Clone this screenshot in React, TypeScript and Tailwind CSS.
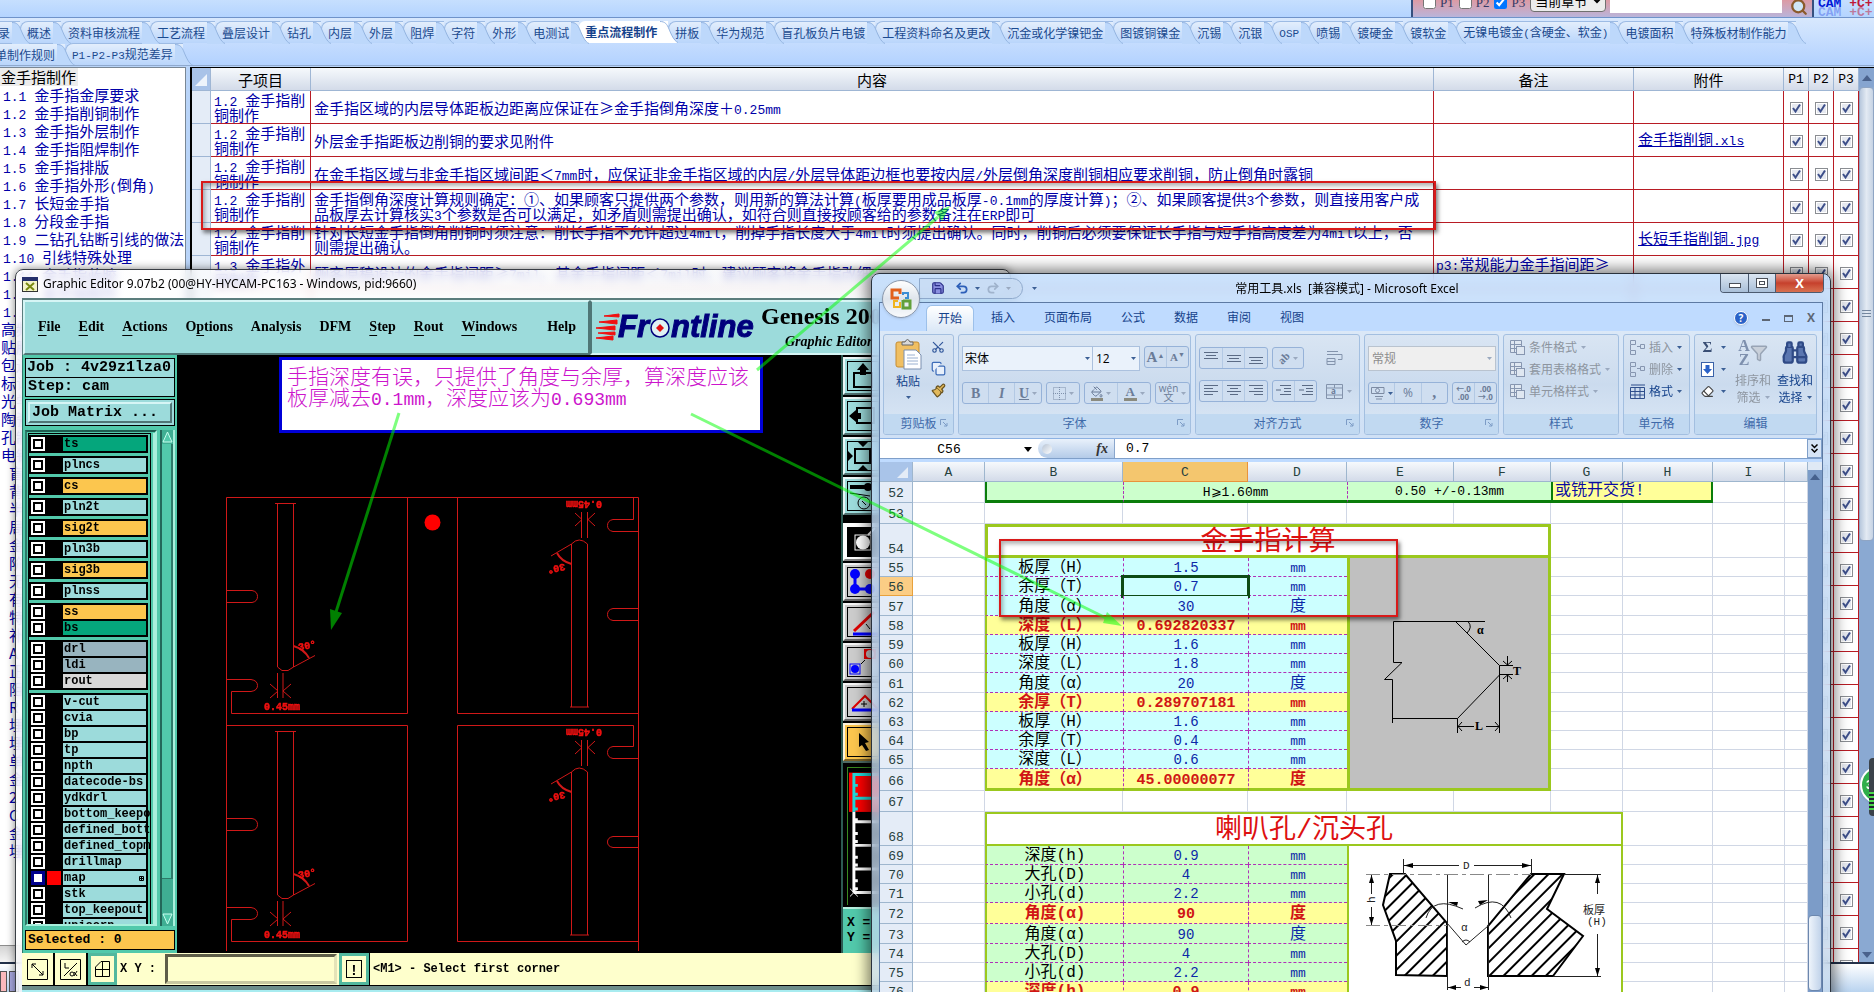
import React from "react";
import { Scissors, Copy, Paintbrush, Save, Undo2, Redo2, Binoculars, Filter, Eraser, PaintBucket, Search } from "lucide-react";

/* ---------- shared text helpers ---------- */

function Mixed({ text, latin }: { text: string; latin: string }) {
  const parts = text.split(/([\x20-\x7e]+)/).filter(Boolean);
  return (
    <>
      {parts.map((p, i) =>
        /^[\x20-\x7e]/.test(p) ? (
          <span key={i} className={latin}>{p}</span>
        ) : (
          <React.Fragment key={i}>{p}</React.Fragment>
        )
      )}
    </>
  );
}

const MONO13 = "whitespace-pre font-['Liberation_Mono',monospace] text-[13px]";
const MONO18 = "whitespace-pre font-['Liberation_Mono',monospace] text-[18px]";

function Tick({ label }: { label: string }) {
  return (
    <span className="relative inline-block size-[13px] align-middle">
      <input type="checkbox" defaultChecked aria-label={label} className="block size-[13px] appearance-none border border-[#8a8d92] bg-[#e6e9f0] shadow-[inset_0_0_0_1px_#fff]" />
      <svg className="pointer-events-none absolute inset-0" width="13" height="13" viewBox="0 0 13 13">
        <path d="M3 6 L5.5 9.5 L10 2.5" fill="none" stroke="#3d4f8a" strokeWidth="2" />
      </svg>
    </span>
  );
}

/* ---------- rule browser behind the windows ---------- */

const tabs = ["录", "概述", "资料审核流程", "工艺流程", "叠层设计", "钻孔", "内层", "外层", "阻焊", "字符", "外形", "电测试", "重点流程制作", "拼板", "华为规范", "盲孔板负片电镀", "工程资料命名及更改", "沉金或化学镍钯金", "图镀铜镍金", "沉锡", "沉银", "OSP", "喷锡", "镀硬金", "镀软金", "无镍电镀金(含硬金、软金)", "电镀面积", "特殊板材制作能力"];

function Tab({ text, active }: { text: string; active?: boolean }) {
  return (
    <button
      className={
        active
          ? "relative h-[22px] shrink-0 rounded-tl-md bg-white pr-[11px] pl-[6px] text-[12px] leading-[16px] font-bold whitespace-nowrap text-[#15428b]"
          : "relative h-[22px] shrink-0 rounded-tl-lg border-t border-l border-[#9dbbe4] bg-gradient-to-b from-[#e3eefc] to-[#b9d5fb] pr-[10px] pl-[6px] text-[12px] leading-[15px] whitespace-nowrap text-[#1b4a8f]"
      }
    >
      <Mixed text={text} latin="font-['Liberation_Mono',monospace] text-[11px]" />
      <svg className="absolute top-0 left-[calc(100%-8px)] z-10" width="18" height="22" viewBox="0 0 18 22">
        <path d="M0 0 C5 0 7 3 9 8 S14 20 18 22 L0 22 Z" fill={active ? "#ffffff" : "#bdd8fb"} />
        <path d="M0 0.5 C5 0.5 7 3 9 8 S14 20 18 21.5" fill="none" stroke="#94b4e0" />
      </svg>
    </button>
  );
}

const tree = ["金手指制作", "1.1 金手指金厚要求", "1.2 金手指削铜制作", "1.3 金手指外层制作", "1.4 金手指阻焊制作", "1.5 金手指排版", "1.6 金手指外形(倒角)", "1.7 长短金手指", "1.8 分段金手指", "1.9 二钻孔钻断引线的做法", "1.10 引线特殊处理", "1.11 金手指蓝胶", "1.12 金手指制作", "1.13 其它"];
const treeRoots = ["高频板制作", "贴膜制作", "包边制作", "标识制作", "光学点", "陶瓷板", "孔制作", "电镀制作"];
const treeLeaves = ["盲孔", "背钻", "半孔", "局部", "金属", "阶梯", "无卤", "有铅", "特殊", "补偿", "A", "正片", "阻焊", "R", "埋孔", "埋阻", "单面", "金", "2", "C", "金", "埋铜"];

const rules: { sub: string[]; body: string[]; note?: string; file?: string }[] = [
  { sub: ["1.2 金手指削", "铜制作"], body: ["金手指区域的内层导体距板边距离应保证在≥金手指倒角深度＋0.25mm"] },
  { sub: ["1.2 金手指削", "铜制作"], body: ["外层金手指距板边削铜的要求见附件"], file: "金手指削铜.xls" },
  { sub: ["1.2 金手指削", "铜制作"], body: ["在金手指区域与非金手指区域间距＜7mm时，应保证非金手指区域的内层/外层导体距边框也要按内层/外层倒角深度削铜相应要求削铜，防止倒角时露铜"] },
  { sub: ["1.2 金手指削", "铜制作"], body: ["金手指倒角深度计算规则确定：①、如果顾客只提供两个参数，则用新的算法计算(板厚要用成品板厚-0.1mm的厚度计算)；②、如果顾客提供3个参数，则直接用客户成", "品板厚去计算核实3个参数是否可以满足，如矛盾则需提出确认，如符合则直接按顾客给的参数备注在ERP即可"] },
  { sub: ["1.2 金手指削", "铜制作"], body: ["针对长短金手指倒角削铜时须注意：削长手指不允许超过4mil，削掉手指长度大于4mil时须提出确认。同时，削铜后必须要保证长手指与短手指高度差为4mil以上，否", "则需提出确认。"], file: "长短手指削铜.jpg" },
  { sub: ["1.3 金手指外", "层制作"], body: ["顾客原稿设计的金手指间距≥7mil，其金手指间距＜7mil时，建议顾客将金手指改细"], note: "p3:常规能力金手指间距≥" },
];
for (let i = 0; i < 21; i++) rules.push({ sub: [""], body: [""] });

function SearchPanel() {
  return (
    <div className="flex h-[17px] items-end overflow-hidden">
      <div className="flex h-[17px] w-[403px] items-end gap-1 overflow-hidden border-x-2 border-[#35507f] bg-gradient-to-b from-[#dc9aa4] to-[#b9b4da] pl-[10px]">
        {["P1", "P2", "P3"].map((p, i) => (
          <label key={p} className="mb-[8px] flex items-center gap-1 pr-px font-['Liberation_Serif',serif] text-[13px] leading-[12px] text-[#333a66]">
            <input type="checkbox" defaultChecked={i === 2} className="size-[13px]" />
            {p}
          </label>
        ))}
        <select aria-label="范围" className="mb-[5px] h-[24px] w-[76px] shrink-0 rounded-sm border border-[#707070] bg-[#ececec] text-[13px] text-black">
          <option>当前章节</option>
        </select>
        <input aria-label="搜索" className="mb-[4px] h-[22px] min-w-0 flex-1 bg-white" />
        <button aria-label="搜索" className="mb-[1px] px-1">
          <Search className="size-[18px] fill-[#cfe6f7] text-[#8b5a2b]" strokeWidth={3} />
        </button>
      </div>
      <div className="w-[60px] overflow-hidden pl-1 font-['Liberation_Mono',monospace] text-[13px] leading-[9px] font-bold whitespace-nowrap text-[#0018d8]">
        CAM <span className="text-[#c01838]">+C+</span>
        <div className="text-[#0018d8]/30">CAM <span className="text-[#c01838]/50">+C+</span></div>
      </div>
    </div>
  );
}

function RuleBrowser() {
  const th = "border-r border-b border-[#9fb6d4] bg-gradient-to-b from-[#f6f9fc] to-[#d3dbe9] p-0 text-center font-normal";
  const td = "border-r border-b border-[#b81c24] p-0";
  return (
    <div className="flex h-full w-full flex-col bg-[#b9d4f8] font-['Noto_Sans_CJK_SC',sans-serif]">
      <div className="flex h-[18px] shrink-0 justify-end border-b border-[#6f93ca] bg-gradient-to-b from-[#c6dffe] to-[#b4d4ff]">
        <SearchPanel />
      </div>
      <div className="h-[48px] shrink-0 overflow-hidden border-b border-[#8fa9ce] bg-gradient-to-b from-[#d8e8fd] to-[#b3d2ff] pt-[3px]">
        <div className="-ml-[9px] flex">
          {tabs.map((t) => (
            <Tab key={t} text={t} active={t === "重点流程制作"} />
          ))}
        </div>
        <div className="-ml-[12px] flex">
          <Tab text="单制作规则" />
          <Tab text="P1-P2-P3规范差异" />
        </div>
      </div>
      <div className="flex min-h-0 flex-1 pt-px">
        <div className="flex w-[186px] shrink-0 flex-col">
          <div className="min-h-0 flex-1 overflow-hidden border-t border-r border-[#7a8794] bg-white text-[15px] leading-[18px] whitespace-nowrap text-[#0000a8]">
            <div className="h-[18px] w-[78px] bg-[#ececec] pl-px text-black">{tree[0]}</div>
            {tree.slice(1).map((t) => (
              <div key={t} className="h-[18px] pl-[3px]"><Mixed text={t} latin={MONO13} /></div>
            ))}
            {treeRoots.map((t) => <div key={t} className="h-[18px] pl-px">{t}</div>)}
            {treeLeaves.map((t, i) => <div key={i} className="h-[18px] pl-[9px]">{t}</div>)}
          </div>
          <div className="h-[17px] border-t border-[#8d8d8d] bg-gradient-to-b from-[#d4d4d4] to-[#f4f4f4]" />
        </div>
        <div className="ml-1 flex min-w-0 flex-1 overflow-hidden border-t border-l-2 border-black bg-white">
          <table className="w-full table-fixed border-separate border-spacing-0 self-start text-[15px] leading-[15px] text-[#0000a8]">
            <colgroup>
              <col className="w-[19px]" /><col className="w-[100px]" /><col /><col className="w-[200px]" /><col className="w-[150px]" />
              <col className="w-[25px]" /><col className="w-[25px]" /><col className="w-[25px]" />
            </colgroup>
            <thead>
              <tr className="h-[23px] text-black">
                <th className={th}>
                  <svg width="18" height="22" viewBox="0 0 18 22"><rect width="18" height="22" fill="#a9c3e8" /><path d="M15 6V18H3Z" fill="#eef4fb" /></svg>
                </th>
                {["子项目", "内容", "备注", "附件"].map((h) => <th key={h} className={th}>{h}</th>)}
                {["P1", "P2", "P3"].map((h) => <th key={h} className={`${th} font-['Liberation_Mono',monospace] text-[13px]`}>{h}</th>)}
              </tr>
            </thead>
            <tbody>
              {rules.map((r, i) => (
                <tr key={i} className="h-[33px]">
                  <td className="border-r border-b border-[#9fb6d4] bg-[#e4ecf7] p-0" />
                  <td className={`${td} pl-[3px] whitespace-nowrap`}>{r.sub.map((l, k) => <div key={k} className="h-[15px]"><Mixed text={l} latin={MONO13} /></div>)}</td>
                  <td className={`${td} overflow-hidden pl-[3px] whitespace-nowrap`}>{r.body.map((l, k) => <div key={k} className="h-[15px]"><Mixed text={l} latin={MONO13} /></div>)}</td>
                  <td className={`${td} overflow-hidden pl-[2px] align-top whitespace-nowrap`}>{r.note ? <div className="h-[15px]"><Mixed text={r.note} latin={MONO13} /></div> : null}</td>
                  <td className={`${td} pl-1 whitespace-nowrap`}>{r.file ? <a href="#file" className="underline"><Mixed text={r.file} latin={MONO13} /></a> : null}</td>
                  {["P1", "P2", "P3"].map((p) => <td key={p} className={`${td} text-center leading-none`}><Tick label={p} /></td>)}
                </tr>
              ))}
            </tbody>
          </table>
          <div className="flex w-[15px] shrink-0 flex-col bg-[#8aa9d2]">
            <div className="grid h-[19px] shrink-0 place-items-center bg-[#86a5d0]"><svg width="10" height="6"><path d="M5 0L10 6H0Z" fill="#4a628c" /></svg></div>
            <div className="grid h-[454px] shrink-0 place-items-center rounded-sm border border-[#8fa5c4] bg-gradient-to-r from-[#b8c8dd] via-[#e3eaf3] to-[#c6d3e4]">
              <svg width="9" height="8" stroke="#74879f"><path d="M0 .5H9M0 3.500H9M0 6.500H9" /></svg>
            </div>
            <div className="flex flex-1 items-end justify-center pb-1"><svg width="10" height="6"><path d="M0 0H10L5 6Z" fill="#4a628c" /></svg></div>
          </div>
        </div>
      </div>
      <div className="flex h-[30px] shrink-0 flex-col border-t-2 border-[#23314a] bg-gradient-to-b from-white to-[#b9d3ef]">
        <div className="h-[7px]" />
        <div className="flex flex-1"><div className="w-[7px] border border-[#555] bg-[#fbb9bb]" /><div className="ml-[2px] w-[10px] border border-[#555] bg-[#a9a9e2]" /></div>
      </div>
    </div>
  );
}

/* ---------- Genesis graphic editor ---------- */

const layerGroups: [string, string][][] = [
  [["ts", "g"]], [["plncs", "t"]], [["cs", "o"]], [["pln2t", "t"]], [["sig2t", "o"]], [["pln3b", "t"]], [["sig3b", "o"]], [["plnss", "t"]],
  [["ss", "o"], ["bs", "g"]],
  [["drl", "b"], ["ldi", "b"], ["rout", "w"]],
  [["v-cut", "t"], ["cvia", "t"], ["bp", "t"], ["tp", "t"], ["npth", "t"], ["datecode-bs", "t"], ["ydkdrl", "t"], ["bottom_keepo", "t"], ["defined_bott", "t"], ["defined_topm", "t"], ["drillmap", "t"], ["map", "t"], ["stk", "t"], ["top_keepout", "t"], ["unicorn", "t"]],
];
const layerBg: Record<string, string> = { g: "bg-[#05a67c]", t: "bg-[#9cdbdb]", o: "bg-[#fcc64e]", b: "bg-[#98b4bf]", w: "bg-[#d8d8d8]" };

const menus: [string, number][] = [["File", 0], ["Edit", 0], ["Actions", 0], ["Options", 1], ["Analysis", -1], ["DFM", -1], ["Step", 0], ["Rout", 0], ["Windows", 0]];

function Board({ dy }: { dy: number }) {
  const txt = "fill-[#f01010] stroke-[#f01010] font-['Liberation_Mono',monospace] text-[10px] font-bold";
  return (
    <g transform={`translate(0 ${dy})`}>
      <path d="M277.5 667V503.5H293.5V667M275 503.5H296M277.5 667L282 670.5H288L293.5 667L315 655.5" />
      <path d="M293.5 646Q304 649 309 658" strokeWidth="2" />
      <path d="M277.5 673V698M283 673V698M270 684L278 691L270 698M291 684L283 691L291 698" />
      <g strokeWidth="0.5">
        <text x="264" y="710" className={txt}>0.45mm</text>
        <text x="299" y="650" className={txt} transform="rotate(-12 302 650)">30°</text>
        <text x="564" y="507" className={txt} transform="rotate(180 583 504)">0.45mm</text>
        <text x="551" y="569" className={txt} transform="rotate(168 558 567)">30°</text>
      </g>
      <path d="M571.5 707V544Q579 536 587.5 544V707M570 707H589M571.5 544L551 556" />
      <path d="M557 553Q561 561 571.5 564" strokeWidth="2" />
      <path d="M581.5 512V538M587.5 512V538M575 513L582 519.5L575 526M595 513L588 519.5L595 526" />
    </g>
  );
}

function BoardCanvas() {
  return (
    <svg className="block h-full w-[664px] shrink-0 bg-black" viewBox="177 355 664 598" preserveAspectRatio="xMinYMin slice" fill="none" stroke="#d01818">
      <path d="M226.5 951V497.5H638.5V951" />
      <path d="M407.5 497V713.5H231.5V691.5H251Q257.5 690.5 257.5 685.5T251 679.5H226.5M226.5 590.5H252Q257.5 591.5 257.5 596.5T252 602.5H226.5" />
      <path d="M457.5 497V713.5H638.5M633.5 497V519.5H613Q607.5 520.5 607.5 525.5T613 531.5H638.5M638.5 608.5H613Q607.5 609.5 607.5 614.5T613 620.5H638.5" />
      <path d="M226.5 725.5H407.5V941.5H231.5V919.5H251Q257.5 918.5 257.5 913.5T251 907.5H226.5M226.5 818.5H252Q257.5 819.5 257.5 824.5T252 830.5H226.5" />
      <path d="M638.5 941.5H457.5V725.5H633.5V746.5H613Q607.5 747.5 607.5 752.5T613 758.5H638.5M638.5 836.5H613Q607.5 837.5 607.5 842T613 847.5H638.5" />
      <circle cx="432.5" cy="522.5" r="8" fill="#ff0000" stroke="none" />
      <Board dy={0} />
      <Board dy={228} />
    </svg>
  );
}

const toolArt: { bg: string; art: React.ReactNode }[] = [
  { bg: "bg-[#9cdbdb]", art: <><path d="M6 12H24V26H6Z" fill="none" stroke="#000" strokeWidth="2" /><path d="M15 2L21 9H18V14H12V9H9Z" /></> },
  { bg: "bg-[#9cdbdb]", art: <><path d="M9 7H26V22H9Z" fill="none" stroke="#000" strokeWidth="2" /><path d="M1 15L8 9V12H13V18H8V21Z" /></> },
  { bg: "bg-[#9cdbdb]", art: <><path d="M7 8H22V22H7Z" fill="none" stroke="#000" strokeWidth="2" /><path d="M10 1H20L15 6ZM10 29H20L15 24ZM0 10V20L5 15Z" /></> },
  { bg: "bg-[#9cdbdb]", art: <><path d="M2 4H18V8H2Z" /><circle cx="20" cy="6" r="4" /><path d="M2 12L22 15" stroke="#000" /><circle cx="16" cy="22" r="6" fill="none" stroke="#000" /><path d="M14 20L18 24" stroke="#000" /></> },
  { bg: "bg-white", art: <><rect width="30" height="30" /><rect x="7" y="8" width="16" height="15" fill="none" stroke="#fff" /><circle cx="15" cy="15.500" r="7" fill="#fff" /><path d="M20 8L27 1" stroke="#fff" strokeWidth="2" /></> },
  { bg: "bg-[#cccccc]", art: <><path d="M7 7V22H22" fill="none" stroke="#0000ff" strokeWidth="3" /><circle cx="7" cy="7" r="5" fill="#0000ff" /><circle cx="7" cy="22" r="5" fill="#0000ff" /><circle cx="22" cy="22" r="5" fill="#0000ff" /><circle cx="22" cy="7" r="5" fill="#e00000" /></> },
  { bg: "bg-[#cccccc]", art: <><path d="M6 24L26 5" stroke="#e00000" strokeWidth="3" /><path d="M5 27H30" stroke="#0000ff" strokeWidth="3" /><path d="M18 17L22 22" stroke="#000" /></> },
  { bg: "bg-[#cccccc]", art: <><rect x="2" y="17" width="10" height="10" fill="none" stroke="#0000ff" /><circle cx="7" cy="22" r="4" fill="#0000ff" /><rect x="16" y="2" width="12" height="10" fill="#f00000" /><circle cx="22" cy="7" r="4" fill="#ccc" /><path d="M13 17L17 13" stroke="#000" /></> },
  { bg: "bg-[#cccccc]", art: <><path d="M4 22L17 9L30 22" fill="none" stroke="#e00000" strokeWidth="2" /><path d="M4 23H30" stroke="#0000ff" strokeWidth="3" /><path d="M16 14V20M13 17H19" stroke="#000" /></> },
  { bg: "bg-[#fcc64e]", art: <path d="M11 6L21 15L17 16L21 23L18 24L14 18L11 20Z" /> },
];

function EditorWindow() {
  const foot = "grid w-[33px] shrink-0 place-items-center border-r-2 border-black";
  return (
    <section className="absolute top-[269px] -bottom-2 left-[15px] w-[996px] rounded-t-lg border border-[#3a3f45] bg-gradient-to-r from-white/75 to-[#f4f6f8]/75 px-[6px] font-['Liberation_Mono',monospace] text-black shadow-[0_0_8px_rgba(0,0,0,0.5)] backdrop-blur-[4px]">
      <header className="flex h-[28px] items-center gap-[5px]">
        <svg width="16" height="15" viewBox="0 0 16 15"><rect x="0.500" y="0.500" width="15" height="14" fill="#f4f4c8" stroke="#333" /><rect width="16" height="4" fill="#25306c" /><path d="M4 6L12 13M12 6L4 13" stroke="#7a8a10" strokeWidth="2" /></svg>
        <h1 className="font-['Noto_Sans','Open_Sans',sans-serif] text-[12px]">Graphic Editor 9.07b2 (00@HY-HYCAM-PC163 - Windows, pid:9660)</h1>
      </header>
      <div className="flex h-[57px] border-t-2 border-l border-[#5b7d7d] bg-[#9cdbdb]">
        <nav className="flex w-[567px] shrink-0 items-center gap-[18px] border-2 border-t-[#d6f5f5] border-r-[#4f7676] border-b-[#4f7676] border-l-[#d6f5f5] pb-[3px] pl-[13px] font-['Liberation_Serif',serif] text-[14px] font-bold">
          {menus.map(([m, u]) => (
            <button key={m}>
              {u < 0 ? m : <>{m.slice(0, u)}<span className="underline underline-offset-4">{m[u]}</span>{m.slice(u + 1)}</>}
            </button>
          ))}
          <button className="mr-[12px] ml-auto">Help</button>
        </nav>
        <div className="flex flex-1 border-2 border-t-[#d6f5f5] border-r-[#4f7676] border-b-[#d6f5f5] border-l-[#4f7676] pl-1">
          <svg className="mt-[11px] shrink-0" width="164" height="32" viewBox="0 0 164 32">
            <path d="M8 3L23 1V4ZM3 9L21 7V11ZM0 15L19 13V17ZM2 20L19 19V22ZM0 25L17 23V27Z" fill="#f01010" stroke="#f01010" />
            <g className="fill-[#00007c] font-['Liberation_Sans',sans-serif] text-[31px] font-bold italic" stroke="#00007c">
              <text x="22" y="24">Fr</text>
              <text x="75" y="24">ntline</text>
            </g>
            <circle cx="64" cy="15" r="9" fill="#dff2f4" stroke="#00007c" strokeWidth="1.500" />
            <path d="M64 11L68 15L64 19L60 15Z" fill="#e01010" />
          </svg>
          <div className="w-[150px] pl-px font-['Liberation_Serif',serif] font-bold whitespace-nowrap">
            <div className="text-[24px] leading-[28px]">Genesis 2000</div>
            <div className="pt-1 pl-6 text-[14px] leading-[16px] italic">Graphic Editor</div>
          </div>
        </div>
      </div>
      <div className="flex h-[598px] bg-black">
        <aside className="flex w-[155px] shrink-0 flex-col border-l border-[#2d7a69] bg-[#52c9ab] px-[2px] pt-[3px] pb-[2px]">
          <div className="h-[20px] border border-black bg-[#9cdbdb] pl-px text-[15px] leading-[18px] font-bold whitespace-nowrap">Job : 4v29z1lza0</div>
          <div className="h-[19px] border border-t-0 border-black bg-[#9cdbdb] pl-[2px] text-[15px] leading-[18px] font-bold">Step: cam</div>
          <div className="mt-[2px] h-[27px] border border-black bg-[#9cdbdb] p-[2px]">
            <button className="block h-full w-full border-2 border-t-[#d6f5f5] border-r-[#4f7676] border-b-[#4f7676] border-l-[#d6f5f5] pl-[2px] text-left text-[15px] leading-[17px] font-bold">Job Matrix ...</button>
          </div>
          <div className="mt-[4px] flex h-[496px] gap-[3px]">
            <div className="flex min-w-0 flex-1 border-t-2 border-r-2 border-b-2 border-l-2 border-t-[#1d5d50] border-r-[#a8efdc] border-b-[#a8efdc] border-l-[#2d7a69] pt-px pl-px">
              <div className="flex min-w-0 flex-1 flex-col gap-[3px] overflow-hidden border-x border-t border-black pt-px pr-[2px]">
                {layerGroups.map((g, gi) => (
                  <div key={gi} className="shrink-0 bg-black p-px pr-[2px]">
                    {g.map(([name, c]) => (
                      <div key={name} className="flex h-[16px] items-center gap-[2px]">
                        <button aria-label={name} className={name === "map" ? "ml-px size-[14px] shrink-0 bg-[#00008c] p-[3px]" : "ml-px size-[14px] shrink-0 bg-white p-[2px]"}>
                          <span className={name === "map" ? "block size-full bg-white" : "block size-full border-2 border-black"} />
                        </button>
                        <span className={name === "map" ? "size-[14px] shrink-0 bg-[#ff0000]" : "size-[14px] shrink-0"} />
                        <span className={`flex h-[14px] min-w-0 flex-1 items-center justify-between pl-px text-[12px] leading-[14px] font-bold whitespace-nowrap ${layerBg[c]}`}>
                          {name}
                          {name === "map" ? <svg className="mr-[2px]" width="5" height="5" viewBox="0 0 5 5"><path d="M.5 .5H4.500V4.500H.5ZM2.500 0V5M0 2.500H5" fill="none" stroke="#000" /></svg> : null}
                        </span>
                      </div>
                    ))}
                  </div>
                ))}
              </div>
              <div className="ml-[2px] w-[2px] bg-[#a8efdc]" />
            </div>
            <div className="flex w-[15px] flex-col border-x-2 border-l-[#23685a] border-r-[#a8efdc] bg-[#3fae93]">
              <svg width="11" height="14" viewBox="0 0 11 14"><path d="M5.500 2L10 12H1Z" fill="#52c9ab" stroke="#c8fff0" /></svg>
              <div className="h-[435px] border-r-2 border-b border-[#2d7a69] bg-[#52c9ab]" />
              <svg className="mt-auto" width="11" height="14" viewBox="0 0 11 14"><path d="M1 2H10L5.500 12Z" fill="#52c9ab" stroke="#c8fff0" /></svg>
            </div>
          </div>
          <div className="mt-[4px] h-[20px] border border-black bg-[#fcc64e] pl-[2px] text-[13px] leading-[18px] font-bold">Selected : 0</div>
        </aside>
        <BoardCanvas />
        <aside className="flex flex-1 flex-col border-l-2 border-[#2d5a52] bg-[#52c9ab]">
          <div className="flex flex-col bg-black">
            {toolArt.map((t, i) => (
              <button key={i} aria-label={`tool ${i + 1}`} className={i === 4 ? "mt-[6px] h-[40px] w-[42px] pt-[2px]" : "h-[40px] w-[42px] pt-[2px]"}>
                <span className={`block h-[38px] border-2 border-t-white/80 border-r-black/50 border-b-black/50 border-l-white/80 p-[2px] ${t.bg}`}>
                  <svg width="32" height="30" viewBox="-1 0 32 30"><rect x="-0.500" y="0.500" width="31" height="29" fill="none" stroke="#000" />{t.art}</svg>
                </span>
              </button>
            ))}
          </div>
          <div className="flex-1 border-t-2 border-[#4d6a64] bg-black pt-1 pl-1">
            <svg width="60" height="138" viewBox="0 0 60 138" className="border-t border-l border-[#3a8a20]">
              <rect x="1" y="4" width="59" height="40" fill="#ff0000" />
              <path d="M6 44V6H60M6 17H10M6 26H10M6 30H60M6 41H10" fill="none" stroke="#20d8d8" strokeWidth="3" />
              <path d="M6 44V126M6 52H10M6 54H60M6 66H10M6 74H10M6 78H60M6 90H10M6 98H10M6 102H60M6 114H10M6 122H10M6 126H60" fill="none" stroke="#fff" strokeWidth="3" />
              <path d="M2 122L10 130M10 122L2 130" stroke="#fff" />
            </svg>
          </div>
          <div className="h-[46px] border-t-2 border-[#b8f0e0] bg-[#52c9ab] pt-[6px] pl-1 text-[13px] leading-[15px] font-bold whitespace-pre">X =<br />Y =</div>
        </aside>
      </div>
      <footer className="flex h-[33px] border-b border-black bg-[#feffcc] text-[12px] font-bold">
        <button aria-label="Zoom area" className={foot}><svg width="21" height="21" viewBox="0 0 21 21" fill="none" stroke="#000"><path d="M.5 .5H20.500V20.500H.5ZM5 5L16 16M5 9V5H9M12 16H16V12" /></svg></button>
        <button aria-label="Units" className={foot}><svg width="21" height="21" viewBox="0 0 21 21" fill="none" stroke="#000"><path d="M.5 .5H20.500V20.500H.5ZM4 17L17 4M5 4V9H9" /><circle cx="12" cy="15" r="2" /><path d="M17 12L14 17M14 13L17 17" /></svg></button>
        <button aria-label="Grid" className="grid w-[29px] shrink-0 place-items-center border-3 border-[#52b89e]"><svg width="15" height="16" viewBox="0 0 15 16" fill="none" stroke="#000"><path d="M.5 6L6 .5H14.500V15.500H.5ZM7.500 0V16M0 8.500H15" /></svg></button>
        <label htmlFor="xy" className="w-[48px] shrink-0 pl-[3px] leading-[33px] whitespace-nowrap">X Y :</label>
        <input id="xy" defaultValue="" className="my-px w-[172px] border-3 border-t-[#5e5e48] border-r-[#e4e4b8] border-b-[#c8c8a0] border-l-[#5e5e48] bg-[#feffcc]" />
        <button aria-label="Alert" className="ml-[2px] grid w-[30px] place-items-center border-3 border-[#52b89e]"><span className="grid h-[18px] w-[16px] place-items-center border border-black text-[14px]">!</span></button>
        <p className="border-l border-black pl-[3px] leading-[33px]">&lt;M1&gt; - Select first corner</p>
      </footer>
      <div className="h-[4px] bg-[#6d8d8a]" />
      <div className="h-[10px] bg-[#a8ecf0]" />
    </section>
  );
}

/* ---------- Excel ---------- */

const SHEETMONO = "font-['Liberation_Mono','Noto_Sans_CJK_SC',monospace]";

function Caret({ dim }: { dim?: boolean }) {
  return <svg className="shrink-0" width="5" height="3"><path d="M0 0H5L2.500 3Z" fill={dim ? "#9aa9bf" : "#3b5f95"} /></svg>;
}

function Lines({ w }: { w: number[][] }) {
  return (
    <svg width="16" height="14" viewBox="0 0 16 14" stroke="#5b6b85" strokeWidth="1">
      {w.map(([y, a, b], i) => <path key={i} d={`M${a} ${y}H${b}`} />)}
    </svg>
  );
}

function Group({ title, width, corner, children }: { title: string; width: string; corner?: boolean; children: React.ReactNode }) {
  return (
    <div className={`relative flex h-[101px] shrink-0 flex-col overflow-hidden rounded-[3px] border border-[#a3bfe0] bg-gradient-to-b from-[#d9e5f3] via-[#cbdbee] to-[#dbe8f6] ${width}`}>
      <div className="flex-1">{children}</div>
      <div className="flex h-[20px] items-center justify-center bg-[#c1d9f1] text-[12px] text-[#3e6aaa]">
        {title}
        {corner ? <svg className="absolute right-[5px] bottom-[7px]" width="8" height="8" fill="none" stroke="#7d9cc6"><path d="M.5 6V.5H6M3 3L7 7M7 4V7H4" /></svg> : null}
      </div>
    </div>
  );
}

function Cluster({ items, className }: { items: React.ReactNode[]; className: string }) {
  return (
    <div className={`flex h-[22px] rounded-[3px] border border-[#96b2d8] bg-[#cfdef0] ${className}`}>
      {items.map((it, i) => (
        <button key={i} className="flex flex-1 items-center justify-center gap-[3px] border-l border-[#b3c9e4] text-[#6b7c98] first:border-l-0">{it}</button>
      ))}
    </div>
  );
}

const serif = "font-['Liberation_Serif',serif] font-bold";

function Ribbon() {
  return (
    <div className="flex h-[108px] shrink-0 gap-1 border-b border-[#8db2e3] bg-gradient-to-b from-[#dbe8f7] to-[#cfe0f5] px-[3px] pt-[3px] text-[12px] text-[#15428b]">
      <Group title="剪贴板" width="w-[71px]" corner>
        <div className="flex gap-[9px] pt-1 pl-[10px]">
          <button className="flex w-[28px] flex-col items-center">
            <svg width="27" height="31" viewBox="0 0 27 31"><rect x="1" y="3" width="23" height="25" rx="2" fill="#f0bf62" stroke="#c58c30" /><path d="M7 6V3H10Q12.500 -2 15 3H18V6Z" fill="#d8d8d8" stroke="#666" /><path d="M9 11H21L26 16V30H9Z" fill="#fff" stroke="#7a8fb0" /><path d="M12 16H20M12 19H23M12 22H23M12 25H23" stroke="#9ab0d0" /></svg>
            <span className="mt-1 leading-[16px]">粘贴</span>
            <span className="mt-[6px]"><Caret /></span>
          </button>
          <div className="flex flex-col gap-[7px] pt-px">
            <Scissors className="size-[14px] -rotate-90 text-[#31579b]" />
            <Copy className="size-[15px] fill-[#e8f0fb] text-[#3d6cb8]" />
            <Paintbrush className="size-[15px] fill-[#e2b95c] text-[#6b5522]" />
          </div>
        </div>
      </Group>
      <Group title="字体" width="w-[233px]" corner>
        <div className="flex pt-[11px] pl-[3px]">
          <label className="flex h-[25px] w-[131px] items-center justify-between border border-[#abc1de] bg-[#eaf2fb] px-[2px] text-black">宋体<Caret /></label>
          <label className="flex h-[25px] w-[47px] items-center justify-between border border-l-0 border-[#abc1de] bg-[#eaf2fb] px-[3px] text-black">12<Caret /></label>
          <Cluster className="ml-1 w-[45px]" items={[<span className={`${serif} text-[15px]`}>A<sup className="text-[7px]">▲</sup></span>, <span className={`${serif} text-[11px]`}>A<sup className="text-[7px]">▼</sup></span>]} />
        </div>
        <div className="flex gap-1 pt-[11px] pl-[3px]">
          <Cluster className="w-[80px]" items={[<span className={`${serif} text-[14px]`}>B</span>, <span className={`${serif} text-[14px] italic`}>I</span>, <><span className={`${serif} text-[14px] underline`}>U</span><Caret dim /></>]} />
          <Cluster className="w-[35px]" items={[<><svg width="13" height="13" fill="none" stroke="#7f90ab" strokeDasharray="1 1"><path d="M.5 .5H12.500V12.500H.5ZM6.500 0V13M0 6.500H13" /></svg><Caret dim /></>]} />
          <Cluster className="w-[67px]" items={[<><span className="border-b-3 border-[#8b8b7f]"><PaintBucket className="size-[12px]" /></span><Caret dim /></>, <><span className={`${serif} border-b-3 border-[#8b8b7f] px-[2px] text-[13px] leading-[12px]`}>A</span><Caret dim /></>]} />
          <Cluster className="w-[35px]" items={[<><span className="text-[10px] leading-[9px]">wén<br />文</span><Caret dim /></>]} />
        </div>
      </Group>
      <Group title="对齐方式" width="w-[165px]" corner>
        <div className="flex items-center gap-1 pt-3 pl-[3px]">
          <Cluster className="w-[69px]" items={[<Lines w={[[1.5, 1, 15], [4.5, 3, 13], [7.5, 1, 15]]} />, <Lines w={[[4.5, 1, 15], [7.5, 3, 13], [10.5, 1, 15]]} />, <Lines w={[[6.5, 1, 15], [9.5, 3, 13], [12.5, 1, 15]]} />]} />
          <Cluster className="w-[32px]" items={[<><span className={`${serif} -rotate-45 text-[11px]`}>ab</span><Caret dim /></>]} />
          <svg className="ml-[18px]" width="17" height="16" viewBox="0 0 17 16" fill="none" stroke="#8393ac"><path d="M1 1.500H12M1 4.500H16V9.500H12M1 8.500H9V14.500H1ZM1 11.500H9" /></svg>
        </div>
        <div className="flex items-center gap-1 pt-[11px] pl-[3px]">
          <Cluster className="w-[69px]" items={[<Lines w={[[1.5, 1, 15], [4.5, 1, 10], [7.5, 1, 15], [10.5, 1, 10]]} />, <Lines w={[[1.5, 1, 15], [4.5, 4, 12], [7.5, 1, 15], [10.5, 4, 12]]} />, <Lines w={[[1.5, 1, 15], [4.5, 6, 15], [7.5, 1, 15], [10.5, 6, 15]]} />]} />
          <Cluster className="w-[45px]" items={[<Lines w={[[1.5, 4, 15], [4.5, 8, 15], [7.5, 8, 15], [10.5, 4, 15], [6, 0, 5]]} />, <Lines w={[[1.5, 4, 15], [4.5, 8, 15], [7.5, 8, 15], [10.5, 4, 15], [6, 1, 6]]} />]} />
          <svg className="ml-[5px]" width="17" height="15" viewBox="0 0 17 15" fill="none" stroke="#8393ac"><path d="M.5 .5H16.500V14.500H.5ZM.5 4H16.500M.5 11H16.500M8.500 0V4M8.500 11V15" /><text x="5" y="10" className="fill-[#6b7c98] stroke-none text-[8px] font-bold">a</text></svg>
          <Caret dim />
        </div>
      </Group>
      <Group title="数字" width="w-[135px]" corner>
        <div className="pt-[11px] pl-[3px]">
          <label className="flex h-[25px] w-[128px] items-center justify-between border border-[#b9c3cf] bg-[#efefef] px-[3px] text-[#8d8d8d]">常规<Caret dim /></label>
        </div>
        <div className="flex gap-1 pt-[11px] pl-[3px]">
          <Cluster className="w-[80px]" items={[<><svg width="14" height="13" fill="none" stroke="#7d8ba3"><path d="M.5 .5H13V6.500H.5ZM4 9.500H12M5 12H11" /><circle cx="6.500" cy="3.500" r="2" /></svg><Caret /></>, <span className="text-[12px]">%</span>, <span className={`${serif} text-[16px]`}>,</span>]} />
          <Cluster className="w-[45px]" items={[<span className="text-[8px] leading-[8px] font-bold">←.0<br />.00</span>, <span className="text-[8px] leading-[8px] font-bold">.00<br />→.0</span>]} />
        </div>
      </Group>
      <Group title="样式" width="w-[116px]">
        <div className="flex flex-col gap-[5px] pt-1 pl-[6px] text-[#8d959f]">
          {["条件格式", "套用表格格式", "单元格样式"].map((t) => (
            <button key={t} className="flex h-[17px] items-center gap-1 whitespace-nowrap">
              <svg className="shrink-0" width="15" height="15" viewBox="0 0 15 15" fill="#dfe7f1" stroke="#8796b0"><path d="M.5 .5H11.500V12.500H.5ZM.5 4.500H11.500M.5 8.500H11.500M4.500 .5V12.500" /><rect x="6.500" y="6.500" width="8" height="8" /></svg>
              {t}<Caret dim />
            </button>
          ))}
        </div>
      </Group>
      <Group title="单元格" width="w-[67px]">
        <div className="flex flex-col gap-[5px] pt-1 pl-[6px]">
          {["插入", "删除", "格式"].map((t, i) => (
            <button key={t} className={i < 2 ? "flex h-[17px] items-center gap-1 text-[#8d959f]" : "flex h-[17px] items-center gap-1 text-[#15428b]"}>
              <svg width="15" height="15" viewBox="0 0 15 15" fill="none" stroke={i < 2 ? "#8796b0" : "#2f4f8c"}>
                {i < 2 ? <path d="M.5 .5H5.500V4.500H.5ZM.5 10.500H5.500V14.500H.5ZM.5 5V10M7 6.500H10M10.500 4.500H14.500V8.500H10.500Z" /> : <path d="M.5 3.500H14.500V14.500H.5ZM.5 7.500H14.500M.5 11H14.500M5 3V15M10 3V15M1 1H15" />}
              </svg>
              {t}<Caret />
            </button>
          ))}
        </div>
      </Group>
      <Group title="编辑" width="w-[123px]">
        <div className="flex pt-1 pl-[6px]">
          <div className="flex w-[31px] flex-col gap-[5px]">
            <button className="flex h-[17px] items-center gap-[7px]"><span className={`${serif} w-[13px] text-[15px] text-[#3a4f75]`}>Σ</span><Caret /></button>
            <button className="flex h-[17px] items-center gap-[7px]"><svg width="13" height="15"><rect x=".5" y=".5" width="12" height="14" fill="#fff" stroke="#3a62a8" /><path d="M4.500 3H8.500V7H11L6.500 12L2 7H4.500Z" fill="#2a62c8" /></svg><Caret /></button>
            <button className="flex h-[17px] items-center gap-[7px]"><Eraser className="size-[13px] fill-white text-[#444]" /><Caret /></button>
          </div>
          <button className="w-[42px] text-center leading-[17px] text-[#8d959f]">
            <span className="mb-[5px] flex items-center justify-center"><span className={`${serif} text-[16px] leading-[14px] text-[#7e90ae]`}>A<br />Z</span><Filter className="size-[18px] fill-[#c9d0da] text-[#98a4b5]" /></span>
            排序和<span className="flex items-center justify-center gap-1">筛选<Caret dim /></span>
          </button>
          <button className="w-[42px] text-center leading-[17px]">
            <Binoculars className="mx-auto mb-[6px] h-[27px] w-[28px] fill-[#5a76b0] text-[#2f4a86]" />
            查找和<span className="flex items-center justify-center gap-1">选择<Caret /></span>
          </button>
        </div>
      </Group>
    </div>
  );
}

type Row = { n: number; h: string; kind: "calc" | "key" | "blank" | "other"; v?: [string, string, string]; pal?: "cyan" | "green" };
const R = (n: number, h: string, kind: Row["kind"], v?: [string, string, string], pal?: Row["pal"]): Row => ({ n, h, kind, v, pal });

const rows: Row[] = [
  R(52, "h-[19px]", "other"), R(53, "h-[21px]", "blank"), R(54, "h-[34px]", "other"),
  R(55, "h-[19px]", "calc", ["板厚（H）", "1.5", "mm"], "cyan"),
  R(56, "h-[19px]", "calc", ["余厚（T）", "0.7", "mm"], "cyan"),
  R(57, "h-[20px]", "calc", ["角度（α）", "30", "度"], "cyan"),
  R(58, "h-[19px]", "key", ["深度（L）", "0.692820337", "mm"], "cyan"),
  R(59, "h-[19px]", "calc", ["板厚（H）", "1.6", "mm"], "cyan"),
  R(60, "h-[19px]", "calc", ["深度（L）", "1.8", "mm"], "cyan"),
  R(61, "h-[20px]", "calc", ["角度（α）", "20", "度"], "cyan"),
  R(62, "h-[19px]", "key", ["余厚（T）", "0.289707181", "mm"], "cyan"),
  R(63, "h-[19px]", "calc", ["板厚（H）", "1.6", "mm"], "cyan"),
  R(64, "h-[19px]", "calc", ["余厚（T）", "0.4", "mm"], "cyan"),
  R(65, "h-[19px]", "calc", ["深度（L）", "0.6", "mm"], "cyan"),
  R(66, "h-[22px]", "key", ["角度（α）", "45.00000077", "度"], "cyan"),
  R(67, "h-[21px]", "blank"), R(68, "h-[34px]", "other"),
  R(69, "h-[19px]", "calc", ["深度(h)", "0.9", "mm"], "green"),
  R(70, "h-[19px]", "calc", ["大孔(D)", "4", "mm"], "green"),
  R(71, "h-[19px]", "calc", ["小孔(d)", "2.2", "mm"], "green"),
  R(72, "h-[21px]", "key", ["角度(α)", "90", "度"], "green"),
  R(73, "h-[20px]", "calc", ["角度(α)", "90", "度"], "green"),
  R(74, "h-[19px]", "calc", ["大孔(D)", "4", "mm"], "green"),
  R(75, "h-[19px]", "calc", ["小孔(d)", "2.2", "mm"], "green"),
  R(76, "h-[19px]", "key", ["深度(h)", "0.9", "mm"], "green"),
];

function BevelDiagram() {
  return (
    <svg className="block" width="200" height="229" viewBox="1348 557 200 229" fill="none" stroke="#000">
      <path d="M1483 619.500H1391.500V660.500H1400L1382.500 677.500H1390.500V721M1390.500 716.500H1455.500V731M1453.500 619.500L1497.500 663.500V731M1497.500 673L1455.500 716.500" />
      <path d="M1466 619.500Q1471 625 1465 631M1497.500 663.500H1511M1497.500 672.500H1511M1505.500 654V663M1501 659L1505.500 663L1510 659M1505.500 680V673M1501 677L1505.500 673L1510 677" />
      <path d="M1456 724.500H1472M1484 724.500H1497M1460 720L1456 724.500L1460 729M1493 720L1497 724.500L1493 729" />
      <g className="fill-black stroke-none font-['Liberation_Serif',serif] text-[12px] font-bold"><text x="1475" y="632">α</text><text x="1511" y="673">T</text><text x="1473" y="728">L</text></g>
    </svg>
  );
}

function CountersinkDiagram() {
  return (
    <svg className="block" width="272" height="148" viewBox="1348 844 272 148" fill="none" stroke="#222">
      <defs><pattern id="hatch" width="10" height="10" patternUnits="userSpaceOnUse" patternTransform="rotate(45)"><path d="M0 0V10" stroke="#000" strokeWidth="4" /></pattern></defs>
      <path d="M1389 872H1404L1446 921V974L1395 973V939L1382 903Z" fill="url(#hatch)" stroke="#000" strokeWidth="2" />
      <path d="M1530 872H1563L1546 907L1582 934L1552 974H1487V924Z" fill="url(#hatch)" stroke="#000" strokeWidth="2" />
      <path d="M1402.500 857V872M1530.500 857V872M1402.500 863.500H1458M1473 863.500H1530.500M1446.500 872V988M1487.500 872V988M1446 921L1465 943L1487 924M1563 872.500H1600M1552 974.500H1600M1596.500 872V892M1596.500 932V974M1370.500 872V892M1370.500 905V923M1446.500 985.500H1460M1473 985.500H1487.500" />
      <path d="M1365 872.500H1530M1365 923.500H1446" strokeDasharray="14 4 4 4" stroke="#888" />
      <path d="M1425 916Q1432 893 1462 907M1474 906Q1500 890 1510 916M1461 940Q1465 936 1469 940" />
      <path d="M1403 863.500L1412 861V866ZM1530 863.500L1521 861V866ZM1447 985.500L1455 983V988ZM1487 985.500L1479 983V988ZM1596.500 873L1594 881H1599ZM1596.500 974L1594 966H1599ZM1370.500 873L1368 881H1373ZM1370.500 923L1368 915H1373ZM1447 900L1457 900L1456 904ZM1487 898L1477 899L1479 903Z" fill="#000" stroke="none" />
      <g className="fill-[#222] stroke-none font-['Liberation_Mono','Noto_Sans_CJK_SC',monospace] text-[11px]"><text x="1462" y="867">D</text><text x="1460" y="929">α</text><text x="1463" y="984">d</text><text x="1367" y="902" transform="rotate(-90 1370 898)">h</text><text x="1582" y="912">板厚</text><text x="1586" y="923">(H)</text></g>
    </svg>
  );
}

function SheetRow({ r }: { r: Row }) {
  const grid = "border-r border-b border-[#d0d7e5] p-0";
  const head = <th scope="row" className={`border-r border-b p-0 pt-[3px] text-center text-[13px] leading-[15px] font-normal ${r.n === 54 || r.n === 68 ? "align-bottom" : "align-middle"} ${r.n === 56 ? "border-[#e8a13c] bg-[#fbcd85]" : "border-[#9eb6ce] bg-[#e4ecf7]"} text-[#27413e]`}>{r.n}</th>;
  const blanks = (from: number, to: number) => Array.from({ length: to - from }, (_, i) => <td key={i} className={grid} />);
  let body: React.ReactNode;
  if (r.n === 52) {
    const g = "border-b-3 border-[#0a7d0a] bg-[#ccffcc] p-0 pt-[2px] text-center text-[13px] leading-[14px] text-black";
    body = (
      <>
        <td className={`${g} border-l-2`} />
        <td colSpan={2} className={`${g} border-l border-l-[#b030b8] [border-left-style:dashed]`}>H<span className="font-['Noto_Sans_CJK_SC',sans-serif]">⩾</span>1.60mm</td>
        <td colSpan={2} className={`${g} border-l border-l-[#b030b8] [border-left-style:dashed]`}>0.50 +/-0.13mm</td>
        <td colSpan={2} className="border-r-2 border-b-3 border-l-2 border-[#0a7d0a] bg-[#ffff99] p-0 pt-px pl-[2px] text-left text-[16px] leading-[15px] text-[#0a0aa4]">或铣开交货!</td>
        {blanks(8, 10)}
      </>
    );
  } else if (r.n === 54) {
    body = <><td colSpan={5} className="border-3 border-[#9bc81e] p-0 pt-1 text-center text-[27px] leading-[24px] text-[#dd1111]">金手指计算</td>{blanks(6, 10)}</>;
  } else if (r.n === 68) {
    body = <><td colSpan={6} className="border-2 border-[#9bc81e] p-0 pt-1 text-center text-[27px] leading-[26px] text-[#dd1111]">喇叭孔/沉头孔</td>{blanks(7, 10)}</>;
  } else if (r.v) {
    const key = r.kind === "key";
    const tone = key ? "bg-[#ffff99] font-bold text-[#d01515]" : r.pal === "cyan" ? "bg-[#ccffff]" : "bg-[#ccffcc]";
    const line = r.n === 66 ? "border-b-3 border-b-[#9bc81e]" : "border-b border-b-[#b030b8] [border-bottom-style:dashed]";
    const cell = `p-0 pt-[3px] text-center leading-[15px] ${tone} ${line}`;
    body = (
      <>
        <td className={`${cell} border-l-2 border-l-[#9bc81e] text-[16px] ${key ? "" : "text-black"}`}>{r.v[0]}</td>
        <td className={`${cell} relative border-l border-l-[#b030b8] [border-left-style:dashed] ${key ? "text-[15px]" : "text-[14px] text-[#0c28a8]"} ${r.n === 56 ? "outline-3 -outline-offset-1 outline-[#0d4a14]" : ""}`}>{r.v[1]}</td>
        <td className={`${cell} border-l border-l-[#b030b8] [border-left-style:dashed] ${r.v[2] === "度" ? "text-[16px]" : "text-[13px]"} ${key ? "" : "text-[#0c28a8]"}`}>{r.v[2]}</td>
        {r.n === 55 ? <td colSpan={2} rowSpan={12} className="border-x-3 border-b-3 border-[#9bc81e] bg-[#c0c0c0] p-0"><BevelDiagram /></td> : null}
        {r.n === 69 ? <td colSpan={3} rowSpan={8} className="border-x-2 border-[#9bc81e] bg-white p-0 align-top"><CountersinkDiagram /></td> : null}
        {r.pal === "cyan" ? blanks(6, 10) : blanks(7, 10)}
      </>
    );
  } else body = blanks(1, 10);
  return <tr className={r.h}>{head}<td className={grid} />{body}</tr>;
}

function Sheet() {
  return (
    <div className="flex min-h-0 flex-1 overflow-hidden bg-white">
      <table className={`w-[928px] shrink-0 table-fixed border-separate border-spacing-0 self-start ${SHEETMONO}`}>
        <colgroup>
          <col className="w-[33px]" /><col className="w-[72px]" /><col className="w-[138px]" /><col className="w-[125px]" /><col className="w-[99px]" /><col className="w-[107px]" />
          <col className="w-[97px]" /><col className="w-[72px]" /><col className="w-[90px]" /><col className="w-[72px]" /><col className="w-[23px]" />
        </colgroup>
        <thead>
          <tr className="h-[20px] text-[13px] leading-[14px] text-[#27413e]">
            <th className="border-r border-b border-[#9eb6ce] bg-[#a9c4e9] p-0"><svg className="ml-auto mr-1" width="12" height="12"><path d="M12 1V12H1Z" fill="#e4ecf7" /></svg></th>
            {["A", "B", "C", "D", "E", "F", "G", "H", "I", ""].map((c, i) => (
              <th key={i} className={`border-r border-b p-0 pt-[2px] font-normal ${c === "C" ? "border-[#e8933c] bg-[#f4c66e]" : "border-[#9eb6ce] bg-gradient-to-b from-[#f6f9fc] to-[#d3dbe9]"}`}>{c}</th>
            ))}
          </tr>
        </thead>
        <tbody>{rows.map((r) => <SheetRow key={r.n} r={r} />)}</tbody>
      </table>
      <div className="flex flex-1 flex-col bg-[#7c9cc8]">
        <div className="h-[9px] shrink-0 border-b border-[#7c9cc8] bg-[#dfe9f5]" />
        <div className="grid h-[12px] shrink-0 place-items-center"><svg width="10" height="6"><path d="M5 0L10 6H0Z" fill="#46618d" /></svg></div>
        <div className="mt-[432px] h-[76px] rounded-sm border border-[#6c87ae] bg-gradient-to-r from-[#eef4fb] to-[#c1d3ea]" />
      </div>
    </div>
  );
}

function OfficeButton() {
  return (
    <button aria-label="Office" className="absolute top-[6px] left-[10px] z-10 size-[38px] rounded-full border border-[#8b98ab] bg-gradient-to-b from-white via-[#dfe5ec] to-[#f8fafc] shadow">
      <svg className="mx-auto" width="24" height="24" viewBox="0 0 24 24" fill="none">
        <path d="M10 11H3V3H11V7" stroke="#e2601c" strokeWidth="3" />
        <path d="M14 8V6H19V11H16" stroke="#3c8ed4" strokeWidth="2" />
        <path d="M9 14H5V20H11V15" stroke="#f0b41e" strokeWidth="2" />
        <path d="M14 13V21H21V14H14" stroke="#62a03a" strokeWidth="3" />
      </svg>
    </button>
  );
}

function ExcelWindow() {
  return (
    <section className="absolute top-[273px] -bottom-4 left-[871px] flex w-[960px] flex-col rounded-t-lg border border-[#2a323c] bg-gradient-to-b from-[#b9d8fb]/75 to-[#c4d8ec]/75 px-[7px] font-['Open_Sans','Noto_Sans_CJK_SC',sans-serif] shadow-[0_0_14px_4px_rgba(0,0,0,0.5)] backdrop-blur-[6px]">
      <OfficeButton />
      <header className="relative flex h-[28px] shrink-0 items-center">
        <div className="ml-[40px] flex h-[21px] w-[104px] items-center gap-[6px] rounded-r-full border border-[#8ea9cc] bg-[#c9dcf2]/70 pl-[11px]">
          <Save className="size-[14px] fill-[#8a8fe0] text-[#2b2f88]" />
          <Undo2 className="ml-1 size-[14px] text-[#2d5fb8]" strokeWidth={3} /><Caret />
          <Redo2 className="size-[14px] text-[#a0b3cc]" strokeWidth={3} /><Caret dim />
        </div>
        <span className="ml-[9px]"><Caret /></span>
        <h2 className="absolute inset-x-0 pt-[2px] pr-[8px] text-center font-['Noto_Sans','Noto_Sans_CJK_SC',sans-serif] text-[12px] whitespace-pre text-black">常用工具.xls  [兼容模式] - Microsoft Excel</h2>
        <div className="absolute top-0 right-[-1px] flex h-[19px] overflow-hidden rounded-b-[4px] border border-t-0 border-[#4c5b70]">
          <button aria-label="最小化" className="grid w-[28px] place-items-center border-r border-[#4c5b70] bg-gradient-to-b from-[#dbe6f2] to-[#a9bfd8]"><span className="mt-1 h-[5px] w-[12px] border border-[#4a4f58] bg-white" /></button>
          <button aria-label="还原" className="grid w-[27px] place-items-center border-r border-[#4c5b70] bg-gradient-to-b from-[#dbe6f2] to-[#a9bfd8]"><span className="h-[10px] w-[12px] border border-[#4a4f58] bg-white p-[2px]"><span className="block h-full border border-[#4a4f58]" /></span></button>
          <button aria-label="关闭" className="w-[47px] bg-gradient-to-b from-[#e39a8c] via-[#c6402c] to-[#d87050] text-[13px] leading-[17px] font-bold text-white">X</button>
        </div>
      </header>
      <div className="flex min-h-0 flex-1 flex-col border border-[#5d7aa3] bg-[#bfdbff]">
        <nav className="flex h-[28px] shrink-0 items-end gap-[5px] pl-[46px] text-[12px] text-[#15428b]">
          {["开始", "插入", "页面布局", "公式", "数据", "审阅", "视图"].map((t, i) => (
            <button key={t} className={i === 0 ? "h-[26px] rounded-t-md border border-b-0 border-[#9cc0ea] bg-gradient-to-b from-white to-[#dbe8f7] px-[11px]" : "h-[26px] px-3"}>{t}</button>
          ))}
          <div className="mr-[7px] ml-auto flex h-[26px] items-center gap-[14px] text-[#5d6674]">
            <button aria-label="帮助" className="size-[14px] rounded-full border border-white bg-[#2a62c8] text-[10px] leading-[11px] font-bold text-white shadow">?</button>
            <button aria-label="最小化工作簿" className="mt-1 h-[2px] w-[8px] bg-[#5d6674]" />
            <button aria-label="还原工作簿" className="h-[7px] w-[9px] border border-t-2 border-[#5d6674]" />
            <button aria-label="关闭工作簿" className="text-[12px] font-bold">X</button>
          </div>
        </nav>
        <Ribbon />
        <div className="mb-[3px] flex h-[20px] shrink-0 border-b border-[#7f9fc9] bg-white text-black">
          <div className={`w-[138px] pt-[2px] text-center text-[13px] leading-[18px] ${SHEETMONO}`}>C56</div>
          <svg className="mt-2 ml-[6px]" width="8" height="5"><path d="M0 0H8L4 5Z" /></svg>
          <div className="ml-[6px] flex w-[77px] items-center justify-between rounded-l-full border-r border-[#8aa6cc] bg-gradient-to-b from-[#e9f1fb] to-[#b4cbe8] pr-[6px] pl-[4px]">
            <span className="size-[10px] rounded-full bg-gradient-to-br from-[#b8c4d4] to-white" />
            <span className="font-['Liberation_Serif',serif] text-[14px] font-bold text-[#333] italic">fx</span>
          </div>
          <input aria-label="编辑栏" defaultValue="0.7" className={`min-w-0 flex-1 pt-px pl-[11px] text-[13px] ${SHEETMONO}`} />
          <button aria-label="展开" className="grid w-[15px] place-items-center border border-[#7f9fc9] bg-[#d5e4f6]"><svg width="7" height="9" fill="none" stroke="#000" strokeWidth="1.500"><path d="M.5 .5L3.500 3.500L6.500 .5M.5 5L3.500 8L6.500 5" /></svg></button>
        </div>
        <Sheet />
      </div>
    </section>
  );
}

/* ---------- annotations ---------- */

function Annotations() {
  const box = "pointer-events-none absolute border-2 border-[#d81a1a] shadow-[2px_3px_4px_rgba(0,0,0,0.5),inset_2px_3px_4px_rgba(0,0,0,0.3)]";
  return (
    <>
      <div className={`${box} top-[181px] left-[201px] h-[49px] w-[1235px]`} />
      <div className={`${box} top-[539px] left-[999px] h-[78px] w-[399px]`} />
      <p className="absolute top-[357px] left-[279px] h-[76px] w-[484px] border-3 border-[#0000d8] bg-white pt-[5px] pl-[5px] font-['Noto_Sans_CJK_SC',sans-serif] text-[21px] leading-[21px] font-light whitespace-nowrap text-[#cc14cc]">
        手指深度有误，只提供了角度与余厚，算深度应该<br />
        <Mixed text="板厚减去0.1mm，深度应该为0.693mm" latin={MONO18} />
      </p>
      <svg className="pointer-events-none absolute top-0 left-0" width="1874" height="992" viewBox="0 0 1874 992" stroke="#00ff00" fill="#00ff00">
        <g opacity="0.5"><path d="M399 413L336 612" strokeWidth="3" /><path d="M331 630L330 609L342 613Z" stroke="none" /></g>
        <g opacity="0.5"><path d="M757 370L938 217" strokeWidth="3" /><path d="M950 206L934 212L942 221Z" stroke="none" /></g>
        <g opacity="0.5"><path d="M691 414L1106 618" strokeWidth="3" /><path d="M1122 626L1107 612L1103 623Z" stroke="none" /></g>
      </svg>
    </>
  );
}

export default function App() {
  return (
    <main className="relative h-screen w-full overflow-hidden">
      <RuleBrowser />
      <EditorWindow />
      <ExcelWindow />
      <div className="absolute top-[766px] -right-[24px] size-[38px] rounded-full border-2 border-white bg-[#2fae4a] pl-[4px] font-['Liberation_Sans',sans-serif] text-[13px] leading-[34px] font-bold text-white shadow">3</div>
      <div className="absolute top-[758px] right-0 h-[58px] w-[5px] rounded-l bg-[#3a424a] pt-[34px]"><div className="h-[18px] bg-[repeating-linear-gradient(#4ad84a_0_2px,#223_2px_4px)]" /></div>
      <Annotations />
    </main>
  );
}
